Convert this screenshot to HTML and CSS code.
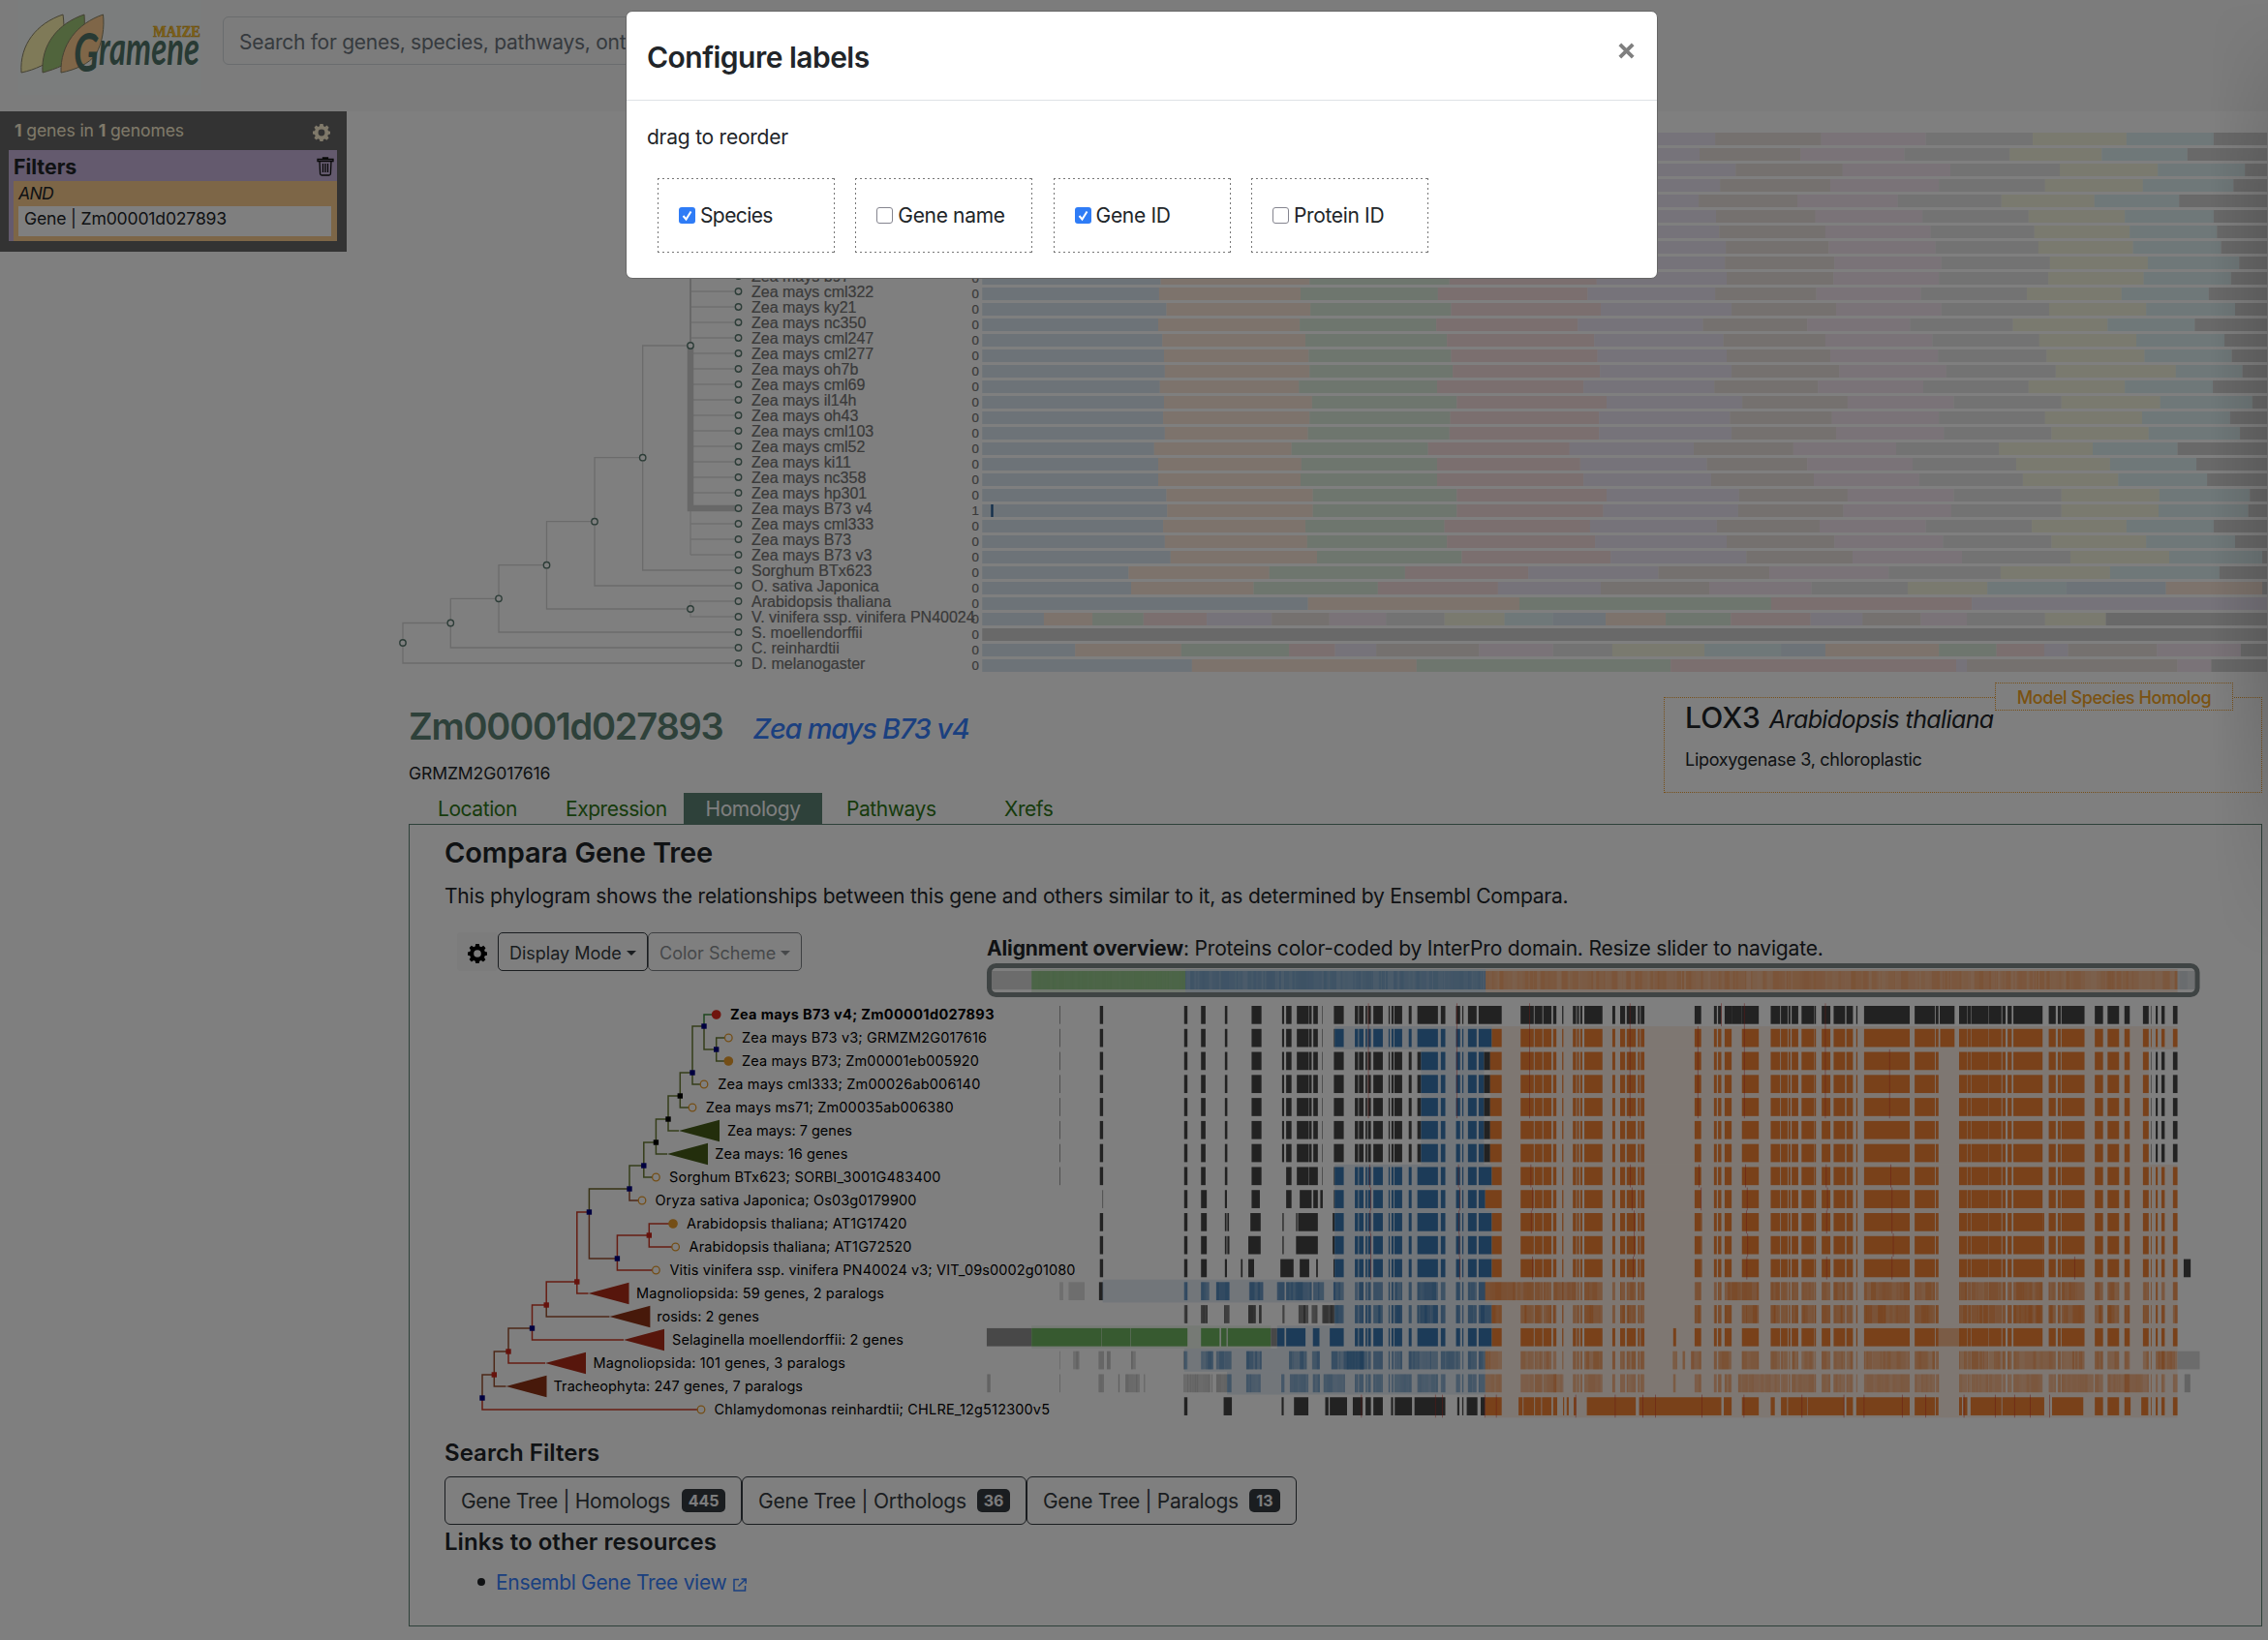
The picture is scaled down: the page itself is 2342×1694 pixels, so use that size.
FILE: index.html
```html
<!DOCTYPE html>
<html lang="en">
<head>
<meta charset="utf-8">
<title>Gramene Maize</title>
<link rel="stylesheet" href="styles.css">
</head>
<body>
<header class="topbar">
  <svg class="logo" viewBox="0 0 215 100" width="215" height="100">
    <rect x="19" y="0" width="189" height="98" fill="#f7fbfa"/>
    <g stroke="#8a8468" stroke-width="1">
      <path d="M65 15C38 24 20 46 22 75C36 72 50 66 59 56C66 44 67 28 65 15Z" fill="#fff5b0"/>
      <path d="M87 15C60 24 42 46 44 75C58 71 72 66 80 56C87 44 88 28 87 15Z" fill="#a0c878"/>
      <path d="M106.500 15C80 24 62 46 63 75C78 72 92 66 99 56C106 44 108 28 106.500 15Z" fill="#ffcd90"/>
    </g>
    <text class="logo-maize" x="158" y="37.500" textLength="49" lengthAdjust="spacingAndGlyphs">MAIZE</text>
    <text class="logo-name" x="76" y="67" textLength="130" lengthAdjust="spacingAndGlyphs"><tspan class="logo-g" dy="7">G</tspan><tspan dy="-7">ramene</tspan></text>
  </svg>
  <div class="search">Search for genes, species, pathways, ontology terms, domains...</div>
</header>

<div class="main">
  <aside class="sidebar">
    <div class="side-status">
      <span><b>1</b> genes in <b>1</b> genomes</span>
      <svg class="side-gear" viewBox="0 0 20 20" width="18" height="18"><use href="#gear"/></svg>
    </div>
    <div class="filters">
      <div class="filters-head"><b>Filters</b>
        <svg viewBox="0 0 18 20" width="18" height="20" fill="none" stroke="#111" stroke-width="1.300"><path d="M1 2.500h16v2H1zM6.500 2.500V1h5v1.500M3 4.500l.6 13q.1 1.500 1.600 1.500h7.600q1.500 0 1.600-1.500l.6-13M6.500 7v9M9 7v9M11.500 7v9"/></svg>
      </div>
      <div class="filter-group">
        <i>AND</i>
        <div class="filter-item">Gene | Zm00001d027893</div>
      </div>
    </div>
  </aside>
  <svg class="taxonomy" id="taxonomy" viewBox="400 115 1942 585" width="1942" height="585"></svg>
</div>

<section class="detail">
  <div class="detail-head">
    <div class="gene">
      <div class="gene-title"><span class="gene-id">Zm00001d027893</span><span class="gene-species">Zea mays B73 v4</span></div>
      <div class="gene-synonym">GRMZM2G017616</div>
    </div>
    <div class="homolog">
      <div class="homolog-tag">Model Species Homolog</div>
      <div class="homolog-name"><span class="symbol">LOX3</span> <i>Arabidopsis thaliana</i></div>
      <div class="homolog-desc">Lipoxygenase 3, chloroplastic</div>
    </div>
  </div>
  <nav class="tabs">
    <a class="tab t1">Location</a><a class="tab t2">Expression</a><a class="tab t3 active">Homology</a><a class="tab t4">Pathways</a><a class="tab t5">Xrefs</a>
  </nav>
  <div class="panel">
    <h3>Compara Gene Tree</h3>
    <p class="intro">This phylogram shows the relationships between this gene and others similar to it, as determined by Ensembl Compara.</p>
    <div class="viewer">
      <div class="tree-col">
        <div class="toolbar">
          <span class="gear-btn"><svg viewBox="0 0 20 20" width="20" height="20"><use href="#gear"/></svg></span>
          <span class="btn display"><span>Display Mode</span><i class="caret"></i></span>
          <span class="btn scheme"><span>Color Scheme</span><i class="caret"></i></span>
        </div>
        <svg class="tree" id="tree" viewBox="480 1003 539 463" width="539" height="463"></svg>
      </div>
      <div class="align-col">
        <div class="align-title"><b>Alignment overview</b><span>: Proteins color-coded by InterPro domain. Resize slider to navigate.</span></div>
        <svg class="alignment" id="alignment" viewBox="1019 995 1253 471" width="1253" height="471"></svg>
      </div>
    </div>
    <h4 class="h-filters">Search Filters</h4>
    <div class="filter-buttons">
      <span class="fbtn b1"><span>Gene Tree | Homologs</span><b class="badge">445</b></span>
      <span class="fbtn b2"><span>Gene Tree | Orthologs</span><b class="badge">36</b></span>
      <span class="fbtn b3"><span>Gene Tree | Paralogs</span><b class="badge">13</b></span>
    </div>
    <h4 class="h-links">Links to other resources</h4>
    <div class="resource"><i class="dot"></i><a>Ensembl Gene Tree view</a>
      <svg viewBox="0 0 14 14" width="14" height="14" fill="none" stroke="#3680ff" stroke-width="1.500"><path d="M6 1.500H1v11.500h11.500V8M8.500 1h4.700v4.700M13 1L5.500 8.500"/></svg>
    </div>
  </div>
</section>

<div class="edge-shade"></div>
<div class="backdrop"></div>
<div class="modal">
  <div class="modal-head"><h2>Configure labels</h2>
    <svg viewBox="0 0 14 14" width="17" height="17" stroke="#7f7f7f" stroke-width="3.200"><path d="M1.500 1.500l11 11M12.500 1.500l-11 11"/></svg></div>
  <div class="modal-body">
    <div class="hint">drag to reorder</div>
    <div class="options">
      <label class="option"><i class="check on"><svg viewBox="0 0 17 17" width="17" height="17" fill="none" stroke="#fff" stroke-width="2"><path d="M4.500 9l3 3.500 5-8"/></svg></i><span class="tight">Species</span></label>
      <label class="option"><i class="check"></i><span>Gene name</span></label>
      <label class="option"><i class="check on"><svg viewBox="0 0 17 17" width="17" height="17" fill="none" stroke="#fff" stroke-width="2"><path d="M4.500 9l3 3.500 5-8"/></svg></i><span>Gene ID</span></label>
      <label class="option"><i class="check"></i><span>Protein ID</span></label>
    </div>
  </div>
</div>

<svg width="0" height="0" class="defs"><defs>
  <g id="gear"><path fill-rule="evenodd" d="M8.200 0h3.600l.5 2.500 1.700.7 2.200-1.400 2.300 2.400-1.400 2.100.7 1.800 2.200.4v3.300l-2.300.5-.7 1.700 1.400 2.200-2.400 2.300-2.100-1.400-1.700.7-.5 2.200H8.200l-.5-2.300-1.600-.7-2.200 1.400-2.300-2.300L3 13.900l-.7-1.700L0 11.700V8.400L2.300 8 3 6.200 1.600 4.100l2.300-2.300 2.200 1.400 1.600-.7zM10 6.200a3.800 3.800 0 1 0 0 7.600 3.800 3.800 0 0 0 0-7.600z"/></g>
</defs></svg>
<script src="charts.js"></script>
</body>
</html>
```

FILE: styles.css
```css
* { box-sizing: border-box; }
body { margin: 0; width: 2342px; height: 1694px; overflow: hidden; position: relative; background: #fff; color: #212529; font-family: Inter, "Liberation Sans", sans-serif; font-size: 21px; }
h2, h3, h4, p { margin: 0; font-weight: 600; }
svg { display: block; flex: none; overflow: visible; }
.defs { position: absolute; }
span, b, a, i { white-space: nowrap; }

.topbar { height: 115px; background: #f8f8f8; display: flex; align-items: flex-start; }
.logo-maize { font: bold 16px "Liberation Serif", serif; fill: #ffc52c; stroke: #d69e1e; stroke-width: .6px; }
.logo-name { font: italic 700 48px Lato, sans-serif; fill: #507468; }
.logo-g { font-size: 56px; }
.search { margin: 17px 0 0 15px; width: 1200px; height: 50px; border: 1.330px solid #d4d8dc; border-radius: 6px; padding-left: 16px; line-height: 51px; color: #6c757d; white-space: nowrap; letter-spacing: -.27px; }

.main { display: flex; align-items: flex-start; height: 585px; }
.sidebar { width: 358px; height: 145px; background: #666; padding: 0 10px 0 9px; margin-right: 42px; flex: none; }
.side-status { height: 40px; display: flex; justify-content: space-between; padding: 0 7px 0 6px; line-height: 40px; font-size: 17.600px; letter-spacing: -.13px; color: #fff3d4; }
.side-gear { margin-top: 13px; fill: #fff3d4; }
.filters { background: #c8b4dc; height: 94px; padding-left: 5px; }
.filters-head { height: 32px; display: flex; justify-content: space-between; padding-right: 3px; line-height: 34px; font-size: 21.300px; }
.filters-head svg { margin-top: 7px; }
.filter-group { background: #facc8e; height: 62px; padding: 0 6px 5px 5px; font-size: 17.600px; line-height: 26px; letter-spacing: -.18px; }
.filter-item { background: #fff; height: 31px; line-height: 26px; padding-left: 6px; white-space: nowrap; }
.filter-group > i { display: block; width: max-content; letter-spacing: -.7px; }

.taxonomy text { font: 16px "Liberation Sans", Arial, sans-serif; fill: #747474; stroke: #747474; stroke-width: .2px; }
.taxonomy .count { font-size: 13.300px; text-anchor: middle; }

.detail { padding-left: 422px; }
.detail-head { height: 119px; display: flex; justify-content: space-between; padding-right: 6px; }
.gene { padding-top: 27px; }
.gene-title { height: 46px; line-height: 46px; display: flex; }
.gene-id { font-size: 38px; font-weight: 600; color: #5c8274; margin-right: 31px; letter-spacing: -1.250px; }
.gene-species { font-size: 29px; font-style: italic; font-weight: 500; color: #3680ff; line-height: 51px; letter-spacing: -1.200px; }
.gene-synonym { margin-top: 14px; font-size: 17.600px; line-height: 24px; letter-spacing: -.14px; }
.homolog { position: relative; margin-top: 20px; width: 618px; height: 99px; border: 1px dotted #f0a030; padding: 2px 0 0 21px; }
.homolog-tag { position: absolute; left: 341px; top: -16px; width: 246px; height: 29px; border: 1px dotted #f0a030; background: #fff; color: #f5a524; text-align: center; font-size: 18px; line-height: 29px; font-weight: 500; letter-spacing: -.43px; }
.homolog-name { height: 50px; line-height: 37px; display: flex; gap: 9px; font-weight: 500; }
.symbol { font-size: 30px; letter-spacing: .2px; }
.homolog-name i { font-size: 25px; font-weight: 400; letter-spacing: -.62px; line-height: 41px; }
.homolog-desc { font-size: 18px; line-height: 24px; letter-spacing: -.28px; }

.tabs { display: flex; height: 32px; line-height: 33px; letter-spacing: -.44px; }
.tab { color: #2e7618; }
.t1 { padding-left: 30px; width: 162px; }
.t2 { width: 122px; }
.t3 { width: 143px; text-align: center; margin-right: 25px; }
.t4 { width: 163px; }
.tab.active { background: #5c8274; color: #fff; }
.panel { width: 1914px; height: 829px; border: 1.330px solid #5c8274; padding: 11px 0 0 36px; }
.panel h3 { font-size: 29px; line-height: 36px; letter-spacing: -.12px; }
.intro { margin-top: 11px; line-height: 32px; height: 32px; font-weight: 400; letter-spacing: -.21px; white-space: nowrap; }
.viewer { margin-top: 21px; display: flex; }
.tree-col { width: 560px; padding-left: 21px; }
.toolbar { display: flex; height: 40px; margin-left: -8px; }
.gear-btn { width: 42px; background: #f8f8f8; padding: 12px 0 0 11px; border-radius: 4px; }
.btn { height: 40px; border: 1.330px solid #343a40; border-radius: 5px; padding: 2px 0 0 11px; display: flex; align-items: center; gap: 5px; font-size: 18px; color: #343a40; }
.display { width: 155px; }
.scheme { width: 159px; color: #8c9094; border-color: #7c8084; }
.caret { border: 5px solid transparent; border-top-color: currentColor; border-bottom: 0; }
.align-title { height: 32px; line-height: 34px; letter-spacing: -.18px; }
.align-title b { letter-spacing: -.13px; }
.tree text { font: 14.500px Inter, sans-serif; fill: #000; }
.tree .query { font-weight: 700; }
.panel h4 { font-size: 24px; line-height: 31px; height: 30px; letter-spacing: .04px; }
.panel .h-filters { margin: 19px 0 10px; }
.panel .h-links { margin: 2px 0 11px; }
.filter-buttons { display: flex; height: 50px; }
.fbtn { height: 50px; border: 1.330px solid #343a40; border-radius: 6px; padding: 0 16px; display: flex; align-items: center; justify-content: space-between; color: #343a40; letter-spacing: -.32px; }
.b1 { width: 307px; }
.b2 { width: 294px; letter-spacing: -.22px; }
.b3 { width: 279px; letter-spacing: -.32px; }
.badge { background: #343a40; color: #f8f9fa; font-size: 16px; line-height: 24px; border-radius: 5px; padding: 0 6.500px; letter-spacing: 0; }
.b3 .badge { padding: 0 7.500px; }
.resource { display: flex; align-items: center; height: 32px; color: #3680ff; letter-spacing: -.32px; }
.dot { width: 8px; height: 8px; border-radius: 50%; background: #212529; margin: 0 11px 0 34px; }
.resource svg { margin: 6px 0 0 7px; }

.edge-shade { position: absolute; right: 0; top: 0; width: 60px; height: 1000px; background: linear-gradient(90deg, transparent, rgba(0,0,0,.13)); mask-image: linear-gradient(transparent, #000 20%, #000 70%, transparent); }
.backdrop { position: absolute; inset: 0; background: rgba(0,0,0,.5); }
.modal { position: absolute; left: 646px; top: 11px; width: 1066px; height: 277px; background: #fff; border: 1.330px solid #666; border-radius: 7px; }
.modal-head { height: 92px; border-bottom: 1.330px solid #dee2e6; padding: 0 23px 0 21px; display: flex; justify-content: space-between; }
.modal-head h2 { font-size: 30px; line-height: 94px; letter-spacing: -.52px; }
.modal-head svg { margin-top: 32px; }
.modal-body { padding: 21px 0 0 21px; }
.hint { line-height: 33px; letter-spacing: -.24px; }
.options { display: flex; gap: 21.300px; margin: 26px 0 0 11px; }
.option {
  width: 183px; height: 77px; padding-left: 22px; display: flex; align-items: center; gap: 5px; letter-spacing: -.33px;
  --h: repeating-linear-gradient(90deg, #777 0 2px, transparent 2px 5px);
  --v: repeating-linear-gradient(#777 0 2px, transparent 2px 5px);
  background: var(--h) top / 100% 1px no-repeat, var(--h) bottom / 100% 1px no-repeat, var(--v) left / 1px 100% no-repeat, var(--v) right / 1px 100% no-repeat;
}
.tight { letter-spacing: -.6px; }
.check { width: 17px; height: 17px; border: 1.500px solid #85858f; border-radius: 3px; }
.check.on { background: #2f7cf6; border: 0; }
```

FILE: charts.js
```js
const NS = 'http://www.w3.org/2000/svg';
function add(parent, tag, attrs, text) {
  const e = document.createElementNS(NS, tag);
  for (const k in attrs) e.setAttribute(k, attrs[k]);
  if (text !== undefined) e.textContent = text;
  parent.appendChild(e);
  return e;
}

/* ---------- species tree with chromosome bars ---------- */
const tax = document.getElementById('taxonomy');
/* the first nine rows lie under the dialog and carry no label */
const species = ['', '', '', '', '', '', '', '', '', 'Zea mays b97',
  'Zea mays cml322', 'Zea mays ky21', 'Zea mays nc350', 'Zea mays cml247', 'Zea mays cml277', 'Zea mays oh7b', 'Zea mays cml69', 'Zea mays il14h', 'Zea mays oh43', 'Zea mays cml103', 'Zea mays cml52', 'Zea mays ki11', 'Zea mays nc358', 'Zea mays hp301', 'Zea mays B73 v4', 'Zea mays cml333', 'Zea mays B73', 'Zea mays B73 v3', 'Sorghum BTx623', 'O. sativa Japonica', 'Arabidopsis thaliana', 'V. vinifera ssp. vinifera PN40024', 'S. moellendorffii', 'C. reinhardtii', 'D. melanogaster'];
const chromColors = ['#dae6f0', '#fae6d8', '#dcecdc', '#f6dede', '#ece6f4', '#eae2de', '#f4e6f0', '#e6e6e6', '#f4f4de', '#def0f2'];
const chroms = [
  [220,395,565,740,896,1025,1152,1282,1396,1502], [216,388,555,725,877,1000,1126,1254,1366,1470],
  [228,404,577,760,921,1051,1182,1315,1434,1540], [226,400,570,750,902,1036,1168,1297,1416,1526],
  [215,385,552,722,876,996,1118,1244,1357,1460], [220,395,565,740,897,1018,1148,1277,1394,1502],
  [222,397,567,744,901,1030,1158,1284,1400,1506], [224,400,570,750,909,1034,1164,1289,1404,1511],
  [226,402,573,752,908,1041,1171,1303,1422,1533], [222,403,573,752,910,1040,1168,1301,1417,1523],
  [220,392,559,741,896,1019,1146,1275,1390,1496], [229,404,575,757,916,1043,1171,1302,1420,1528],
  [219,391,557,729,881,1008,1133,1258,1373,1479], [224,398,570,749,906,1030,1160,1290,1408,1515],
  [226,402,575,753,910,1036,1167,1299,1418,1524], [227,403,577,756,916,1047,1177,1310,1456,1537],
  [221,390,558,736,895,1021,1149,1277,1394,1501], [226,406,582,764,929,1057,1186,1317,1437,1549],
  [225,403,574,755,914,1038,1168,1297,1415,1522], [227,401,573,755,916,1043,1174,1305,1423,1534],
  [214,381,547,719,870,991,1116,1241,1355,1458], [219,393,558,732,886,1008,1136,1262,1376,1481],
  [219,392,558,736,891,1016,1144,1270,1386,1494], [229,407,582,764,925,1057,1186,1317,1436,1546],
  [230,407,582,760,924,1052,1183,1317,1435,1544], [225,398,567,744,898,1023,1152,1281,1396,1502],
  [227,400,570,750,910,1041,1173,1305,1420,1528], [234,412,588,769,934,1063,1196,1328,1448,1561],
  [183,354,519,669,827,962,1107,1243,1376,1509], [186,335,486,632,757,889,1013,1130,1227,1323,1444,1561],
  [401,658,964,1208,1567], [80,139,201,278,357,427,496,567,640,699,763,836,915,1012,1075,1146,1202,1297,1371],
  [], [118,247,378,434,484,609,699,771,883,976,1030,1168,1238,1296,1325,1433,1535],
  [260,533,842,1189,1202,1458,1499]];
const bp = v => 1010 + v / 1.1772;
const line = (d, w, c) => add(tax, 'path', { d, fill: 'none', stroke: c || '#dedede', 'stroke-width': w || 1.3 });
const rowY = i => 141 + 16 * i;
for (let i = 0; i < 28; i++) line(`M713 ${rowY(i)}H760`);
line('M713 141V357', 2, '#d0d0d0');
line('M713 357V573');
line('M713 357V525H760', 6.5, '#d0d0d0');
const joints = [[713, 357, 589], [663.7, 472.7, 605], [614, 538.7, 629], [564.5, 583.7, 653], [515, 618.3, 669], [465.3, 643.5, 685]];
const parents = [[663.7, 472.7], [614, 538.7], [564.5, 583.7], [515, 618.3], [465.3, 643.5], [416, 664]];
joints.forEach((j, k) => {
  const p = parents[k], end = k === 2 ? 713 : 760;
  line(`M${j[0]} ${j[1]}H${p[0]}V${j[2]}H${end}`, 1.3, '#d6d6d6');
});
line('M760 621H713V637H760');
const ring = (x, y) => add(tax, 'circle', { cx: x, cy: y, r: 3.2, fill: '#fff', stroke: '#5a7a70', 'stroke-width': 1.4 });
[[713, 357], [713, 629], ...parents].forEach(p => ring(p[0], p[1]));
species.forEach((name, i) => {
  if (name) {
    ring(762.5, rowY(i));
    add(tax, 'text', { x: 776, y: rowY(i) + 6 }, name);
    add(tax, 'text', { x: 1007.3, y: rowY(i) + 6.5, class: 'count' }, i === 24 ? '1' : '0');
  }
  const y = 137 + 16 * i;
  let from = 5;
  chroms[i].forEach((to, k) => {
    add(tax, 'rect', { x: bp(from), y, width: bp(to) - bp(from), height: 13, fill: chromColors[k % 10] });
    from = to;
  });
  if (from < 1566) add(tax, 'rect', { x: bp(from), y, width: bp(1567) - bp(from), height: 13, fill: '#d2d2d2' });
});
add(tax, 'rect', { x: 1023.3, y: 521, width: 2.4, height: 13, fill: '#2a6098' });

/* ---------- gene tree ---------- */
const tree = document.getElementById('tree');
const GREEN = '#6a7c34', RED = '#cc3a26', BROWN = '#9a5030';
const ty = row => 1048 + 24 * row;
const nodes = [ // x, y index, colour
  [727, 0, '#000080'], [739.7, 1, '#000080'], [715, 2, '#000080'], [702.3, 3, '#000'], [690, 4, '#000'], [677.4, 5, '#000'],
  [664.8, 6, '#000080'], [650, 7, '#000080'], [608.4, 8, '#000080'], [670.3, 9, '#cc2418'], [637.4, 10, '#000080'],
  [595.8, 11, '#cc2418'], [564.2, 12, '#cc2418'], [549.5, 13, '#000080'], [525, 14, '#cc2418'], [510.3, 15, '#cc2418'], [498, 16, '#000080']];
const ny = i => 1060 + 24 * nodes[i][1];
const edge = (n, x, y, c) => add(tree, 'path', { d: `M${nodes[n][0]} ${ny(n)}V${y}H${x}`, fill: 'none', stroke: c, 'stroke-width': 1.5 });
[[2,0],[3,2],[4,3],[5,4],[6,5],[7,6]].forEach(e => edge(e[0], nodes[e[1]][0], ny(e[1]), GREEN));
edge(0, nodes[1][0], ny(1), GREEN);
edge(8, nodes[7][0], ny(7), '#6e6428');
edge(8, nodes[10][0], ny(10), BROWN);
edge(10, nodes[9][0], ny(9), RED);
[[11,8],[12,11],[13,12]].forEach(e => edge(e[0], nodes[e[1]][0], ny(e[1]), RED));
[[14,13],[15,14],[16,15]].forEach(e => edge(e[0], nodes[e[1]][0], ny(e[1]), BROWN));
const leaves = [ // parent, x, kind, label, label x, label width, colour
  [0, 739.7, 'red', 'Zea mays B73 v4; Zm00001d027893', 754, 272.5, '#3c8c3c'],
  [1, 752.3, 'open', 'Zea mays B73 v3; GRMZM2G017616', 766, 253, GREEN],
  [1, 752.3, 'full', 'Zea mays B73; Zm00001eb005920', 766, 245, GREEN],
  [2, 727, 'open', 'Zea mays cml333; Zm00026ab006140', 741.3, 271, GREEN],
  [3, 715, 'open', 'Zea mays ms71; Zm00035ab006380', 728.7, 256, GREEN],
  [4, 701, 'tri', 'Zea mays: 7 genes', 751, 129, GREEN, '#465c18'],
  [5, 689, 'tri', 'Zea mays: 16 genes', 738.3, 137, GREEN, '#465c18'],
  [6, 677.4, 'open', 'Sorghum BTx623; SORBI_3001G483400', 691, 280.5, GREEN],
  [7, 663, 'open', 'Oryza sativa Japonica; Os03g0179900', 676.5, 270, BROWN],
  [9, 695, 'full', 'Arabidopsis thaliana; AT1G17420', 709, 227.5, RED],
  [9, 697.6, 'open', 'Arabidopsis thaliana; AT1G72520', 711.5, 230, RED],
  [10, 677.4, 'open', 'Vitis vinifera ssp. vinifera PN40024 v3; VIT_09s0002g01080', 691.5, 419, RED],
  [11, 607.5, 'tri', 'Magnoliopsida: 59 genes, 2 paralogs', 657, 256, RED, '#ae2c18'],
  [12, 629.4, 'tri', 'rosids: 2 genes', 678.3, 105.5, BROWN, '#8e3214'],
  [13, 644, 'tri', 'Selaginella moellendorffii: 2 genes', 694, 239, RED, '#ae2c18'],
  [14, 563, 'tri', 'Magnoliopsida: 101 genes, 3 paralogs', 612.5, 260.5, RED, '#ae2c18'],
  [15, 522.5, 'tri', 'Tracheophyta: 247 genes, 7 paralogs', 571.5, 257.5, BROWN, '#8e3214'],
  [16, 724, 'open', 'Chlamydomonas reinhardtii; CHLRE_12g512300v5', 737.5, 346.5, RED]];
leaves.forEach((l, r) => {
  const y = ty(r);
  edge(l[0], l[1], y, l[6]);
  if (l[2] === 'tri') add(tree, 'path', { d: `M${l[1]} ${y}l42 -11.300v22.600z`, fill: l[7] });
  else add(tree, 'circle', { cx: l[1], cy: y, r: l[2] === 'open' ? 3.8 : 4.2, fill: l[2] === 'red' ? '#e0281c' : l[2] === 'full' ? '#e89c2c' : '#fff', stroke: l[2] === 'red' ? '#e0281c' : '#e89c2c', 'stroke-width': 1.3 });
  add(tree, 'text', { x: l[4], y: y + 5, textLength: l[5], class: r ? '' : 'query' }, l[3]);
});
nodes.forEach((n, i) => add(tree, 'rect', { x: n[0] - 2.7, y: ny(i) - 2.7, width: 5.4, height: 5.4, fill: n[2] }));

/* ---------- alignment ---------- */
const al = document.getElementById('alignment');
const K = 1 / 2.3544;
const px = u => 1010 + u * K;
let seed = 7;
const rnd = () => (seed = (seed * 16807) % 2147483647) / 2147483647;
const DARK = '#444', BLUE = '#3876b0', ORANGE = '#f28234', LEAF = '#6eb460';
function block(a, b, y, h, fill, op) {
  add(al, 'rect', { x: px(a), y, width: (b - a) * K, height: h, fill, 'fill-opacity': op || 1 });
}
function stripes(a, b, y, h, fill, lo, hi) {
  block(a, b, y, h, fill, lo);
  for (let u = a; u < b;) {
    const w = Math.min(b - u, 2.4 + Math.floor(rnd() * rnd() * 7) * 2.4);
    block(u, u + w, y, h, fill, .01 + (hi - lo) * rnd());
    u += w;
  }
}
const R = 1568;
const leftA = [[198,200],[296,304],[501,509],[542,553],[600,606],[665,689],[739,744],[749,762],[775,804],[805,811],[815,826],[836,838],[865,889]];
const core = [[916,924],[926,937],[942,946],[948,955],[961,984],[998,1001],[1005,1010],[1012,1031],[1047,1054],[1068,1118],[1125,1136],[1162,1172],[1177,1180],[1191,1212],[1217,1273],[1319,1351],[1353,1372],[1374,1394],[1398,1406],[1420,1423],[1446,1454],[1456,1461],[1464,1469],[1474,1518],[1542,1549],[1561,1573]];
const right = [[9,31],[36,41],[43,52],[174,190],[221,228],[231,239],[247,264],[289,330],[359,382],[384,400],[402,407],[410,426],[434,465],[466,469],[483,504],[512,540],[543,559],[567,570],[586,697],[709,758],[760,767],[817,837],[838,846],[847,889],[890,920],[922,930],[935,945],[949,1020],[1035,1052],[1057,1064],[1066,1122],[1147,1167],[1178,1206],[1219,1232],[1264,1278],[1283,1285],[1295,1300],[1309,1317],[1337,1348]].map(s => [s[0] + R, s[1] + R]);
const lefts = {
  7: [[198,200],[296,304],[501,509],[542,553],[600,606],[665,689],[749,762],[775,804],[805,826],[836,838],[865,889]],
  8: [[302,304],[501,509],[542,556],[600,605],[665,685],[749,762],[782,811],[815,826],[832,838],[865,889]],
  9: [[296,304],[501,509],[542,556],[600,604],[606,610],[662,687],[740,743],[773,776],[778,826],[862,889]],
  10: [[296,304],[501,509],[542,556],[600,604],[606,611],[657,687],[740,743],[773,826],[862,889]],
  11: [[296,304],[501,509],[542,556],[600,605],[639,643],[657,671],[735,767],[782,805],[822,826],[864,889]],
  12: [[198,207],[220,259],[294,304],[501,509],[542,562],[579,611],[659,693],[727,745],[749,811],[815,841],[864,889]],
  13: [[501,509],[542,558],[598,611],[657,675],[683,689],[740,745],[779,803],[811,825],[837,889]],
  14: [[21,299],[300,370],[371,509],[542,587],[591,604],[607,745],[749,796],[814,830],[855,889]],
  15: [[198,200],[231,246],[293,306],[313,322],[372,383],[499,509],[542,572],[579,616],[652,689],[756,799],[812,831],[859,916]],
  16: [[22,30],[198,200],[293,306],[341,344],[358,393],[403,406],[499,564],[567,570],[579,616],[652,687],[737,745],[758,803],[814,831],[840,892]]
};
const domains = i => {
  if (i === 0) return [];
  if (i >= 2 && i <= 6) return [[1077,1230,BLUE],[1245,2846,ORANGE]];
  if (i === 8) return [[867,1233,BLUE],[1233,2916,ORANGE]];
  if (i === 12) return [[303,1233,BLUE],[1233,2916,ORANGE]];
  if (i === 14) return [[130,712,LEAF],[727,1249,BLUE],[1249,2916,ORANGE]];
  if (i === 15) return [[501,1233,BLUE],[1233,2916,ORANGE]];
  if (i === 16) return [[605,1233,BLUE],[1233,2916,ORANGE]];
  if (i === 17) return [[1233,2916,ORANGE]];
  return [[867,1249,BLUE],[1249,2916,ORANGE]];
};
const softness = { 12: [.55, 1.2], 13: [.6, 1.4], 15: [.42, .95], 16: [.4, .72] };
const lastRow = [[501,509],[597,617],[738,743],[768,803],[844,852],[855,897],[911,935],[942,955],[961,984],[1004,1009],[1013,1055],[1061,1136],[1165,1170],[1177,1180],[1188,1214],[1222,1273],[1314,1324],[1326,1352],[1354,1369],[1371,1394],[1398,1408],[1422,1425],[1431,1436],[1448,1454],[1480,1599],
  ...[[39,239],[245,264],[289,330],[359,369],[384,399],[401,448],[449,538],[543,559],[567,697],[709,758],[760,767],[817,824],[827,837],[845,920],[922,1024],[1043,1119],[1147,1167],[1178,1206],[1219,1234],[1260,1277],[1283,1285],[1295,1300],[1309,1317],[1337,1348]].map(s => [s[0] + R, s[1] + R])];
for (let i = 0; i < 18; i++) {
  const y = 1039 + 23.78 * i, doms = domains(i);
  doms.forEach(d => block(d[0], d[1], y - 2.7, 23.78, d[2], .13));
  let segs = i === 17 ? lastRow : [...(lefts[i] || leftA), ...core, ...right];
  if (i === 0) segs = [...segs, [264 + R, 289 + R], [770 + R, 806 + R]];
  if (i === 1) segs = [...segs, [771 + R, 806 + R]];
  if (i >= 9 && i <= 11) segs = [...segs, [1020 + R, 1024 + R], [190 + R, 192 + R]];
  if (i === 11) segs = [...segs, [1363 + R, 1380 + R]];
  if (i === 12) segs = [...segs, [1273, 1319], [1406, 1446], [264 + R, 289 + R]];
  if (i === 14) segs = [...segs, [122 + R, 129 + R], [767 + R, 820 + R]];
  if (i === 15) segs = [...segs, [889, 942], [1054, 1068], [1136, 1162], [121 + R, 132 + R], [145 + R, 151 + R], [165 + R, 174 + R], [239 + R, 247 + R], [1020 + R, 1035 + R], [1300 + R, 1337 + R]];
  if (i === 16) segs = [...segs, [1031, 1047], [1394, 1420], [122 + R, 128 + R], [280 + R, 289 + R], [330 + R, 359 + R], [426 + R, 434 + R], [767 + R, 768 + R], [1122 + R, 1144 + R], [1206 + R, 1264 + R], [1365 + R, 1379 + R]];
  segs.forEach(s => {
    const cuts = [s[0], ...doms.flatMap(d => [d[0], d[1]]).filter(c => c > s[0] && c < s[1]).sort((a, b) => a - b), s[1]];
    for (let k = 0; k < cuts.length - 1; k++) {
      const a = cuts[k], b = cuts[k + 1];
      const d = doms.find(d => a >= d[0] && a < d[1]);
      const soft = softness[i];
      if (!d && (i === 15 || i === 16)) stripes(a, b, y, 18.7, '#888', .3, .6);
      else if (!d && i === 12) block(a, b, y, 18.7, a > 290 ? DARK : '#ddd');
      else if (!d && i === 14) block(a, b, y, 18.7, '#909090');
      else if (i === 14 && s[0] === 767 + R) block(a, b, y, 18.7, ORANGE, .5);
      else if (soft) stripes(a, b, y, 18.7, d ? d[2] : '#444', soft[0], soft[1]);
      else block(a, b, y, 18.7, d ? d[2] : DARK, s[1] - s[0] < 3 && !d ? .6 : 1);
    }
  });
}
block(2916, 2970, 1039 + 23.78 * 15, 18.7, '#d8d8d8');

/* splice junction ticks */
const ticks = [];
for (let i = 0; i < 5; i++) ticks.push([i, [949,1164,1341,R+17,R+295,R+492].concat(i ? [R+182] : [R+239], i > 1 ? [R+648] : [])]);
ticks.push([7, [952,1168,1344,R+18,R+185,R+298,R+494,R+651]], [8, [955,1171,1348,R+22,R+190,R+302,R+497,R+654]], [9, [953,1169,1345,R+27,R+300,R+495,R+654]], [10, [955,1170,R+27,R+303,R+657]], [11, [955,1171,1348,R+25,R+301,R+495,R+654,R+1098]],
  [17, [932,1112,1129,1232,1260,1453,1549,R+48,R+79,R+192,R+294,R+435,R+537,R+586,R+679,R+736,R+829,R+905,R+952,R+990,R+1037]]);
ticks.forEach(t => t[1].forEach(u => block(u - 1, u + 1, 1036.3 + 23.78 * t[0], 23.78, '#d03028', .55)));

/* overview strip inside its slider */
block(130, 504, 1001, 24, LEAF, .2);
block(504, 1234, 1001, 24, BLUE, .2);
block(1234, 2916, 1001, 24, ORANGE, .2);
block(33, 130, 1003, 19, '#d8d8d8');
stripes(130, 504, 1003, 19, LEAF, .6, .72);
stripes(504, 1234, 1003, 19, BLUE, .4, .7);
stripes(1234, 2916, 1003, 19, ORANGE, .35, .8);
stripes(2916, 2958, 1003, 19, '#b8c0c8', .4, .8);
add(al, 'rect', { x: 1021.5, y: 997.5, width: 1247.5, height: 30, rx: 7, fill: 'none', stroke: '#7e8888', 'stroke-width': 5 });
```
